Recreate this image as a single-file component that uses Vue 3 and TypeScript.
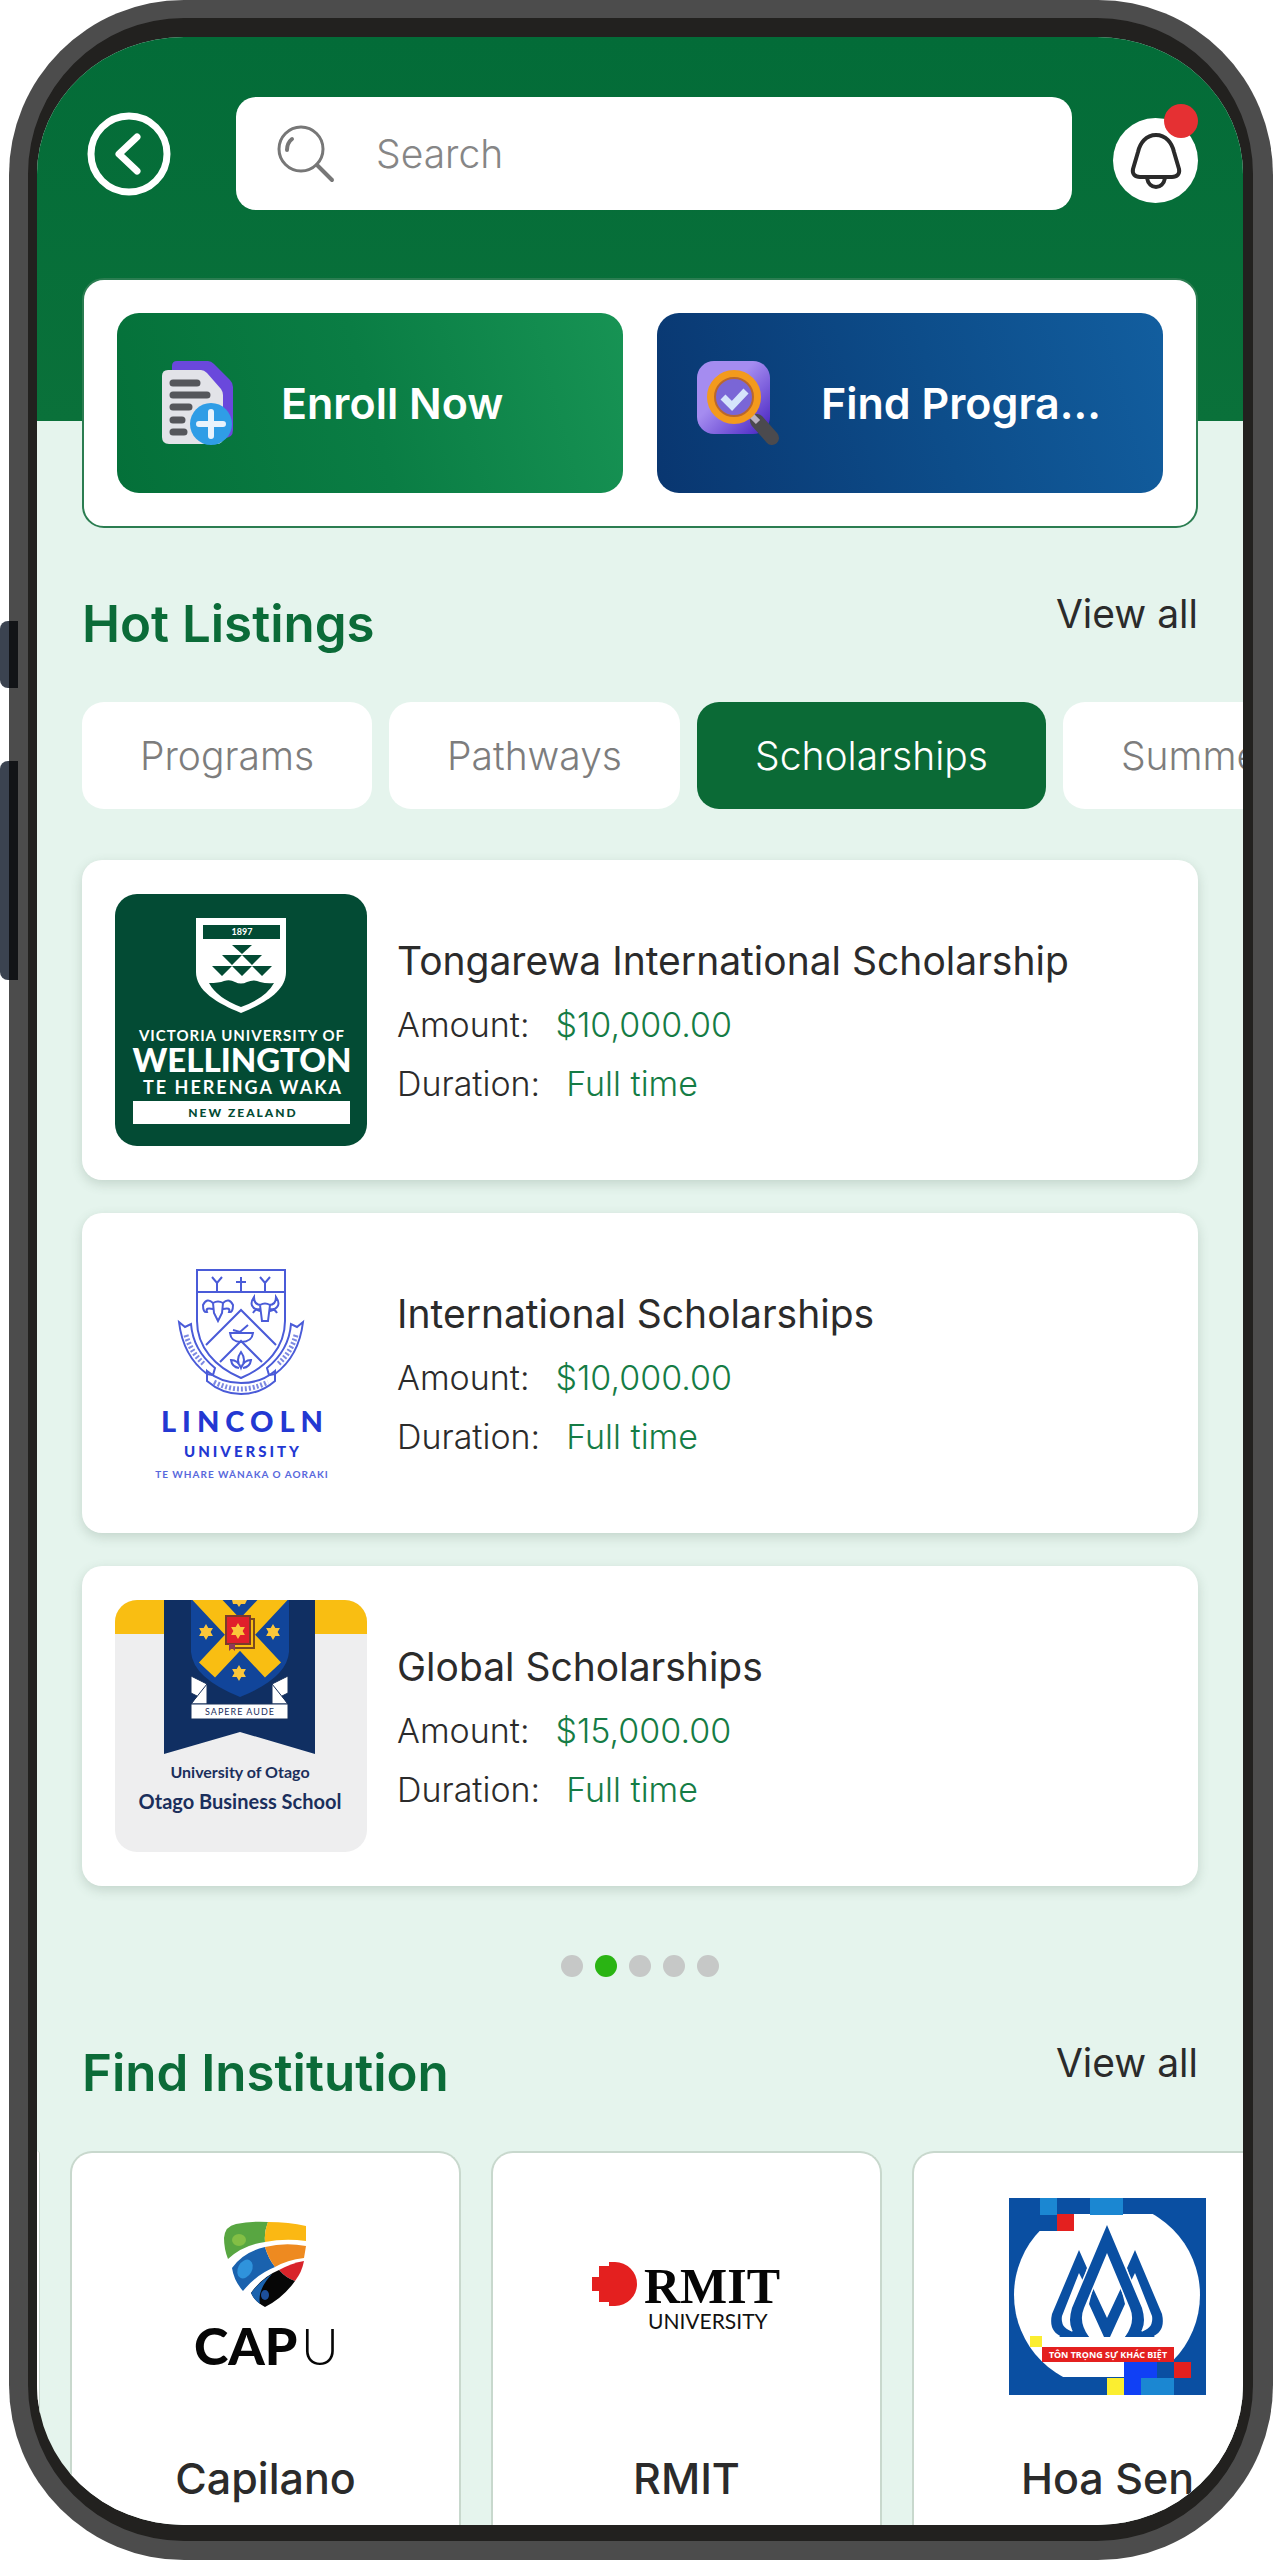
<script setup lang="ts">
import { ref } from 'vue'

interface Listing {
  id: 'wellington' | 'lincoln' | 'otago'
  title: string
  amount: string
  duration: string
}

interface Institution {
  id: 'capu' | 'rmit' | 'hoasen'
  name: string
}

const query = ref('')
const tabs: string[] = ['Programs', 'Pathways', 'Scholarships', 'Summer']
const activeTab = ref('Scholarships')
const activePage = ref(2)

const listings: Listing[] = [
  { id: 'wellington', title: 'Tongarewa International Scholarship', amount: '$10,000.00', duration: 'Full time' },
  { id: 'lincoln', title: 'International Scholarships', amount: '$10,000.00', duration: 'Full time' },
  { id: 'otago', title: 'Global Scholarships', amount: '$15,000.00', duration: 'Full time' },
]

const institutions: Institution[] = [
  { id: 'capu', name: 'Capilano' },
  { id: 'rmit', name: 'RMIT' },
  { id: 'hoasen', name: 'Hoa Sen' },
]

// Six-pointed star outline centred on (cx, cy)
function star(cx: number, cy: number, r: number): string {
  const points: string[] = []
  for (let i = 0; i < 12; i++) {
    const radius = i % 2 === 0 ? r : r * 0.58
    const angle = (Math.PI / 6) * i - Math.PI / 2
    points.push(`${cx + radius * Math.cos(angle)},${cy + radius * Math.sin(angle)}`)
  }
  return points.join(' ')
}
</script>

<template>
  <div class="device">
    <span class="side-key side-key-small"></span>
    <span class="side-key side-key-large"></span>
    <div class="bezel">
      <div class="screen">
        <header class="hero">
          <button class="back" type="button" aria-label="Back">
            <svg width="84" height="86" viewBox="0 0 84 86" fill="none" stroke="#fff" stroke-linecap="round" stroke-linejoin="round">
              <circle cx="42" cy="43" r="38" stroke-width="7" />
              <path d="M50 26 32 43 50 60" stroke-width="7" />
            </svg>
          </button>
          <label class="search">
            <svg width="58" height="58" viewBox="0 0 58 58" fill="none" stroke="#777" stroke-width="3" stroke-linecap="round">
              <circle cx="24" cy="24" r="22" />
              <path d="M40 40 55 55" stroke-width="4" />
              <path d="M10 25Q10 18 15 14" stroke-width="4" />
            </svg>
            <input v-model="query" type="text" placeholder="Search" aria-label="Search" />
          </label>
          <button class="bell" type="button" aria-label="Notifications">
            <span class="bell-disc">
              <svg width="85" height="85" viewBox="0 0 85 85" fill="none" stroke="#2a2a2a" stroke-width="4" stroke-linejoin="round">
                <path d="M43 17C33 17 27 25 25 34L20 51C19 56 22 59 27 59H59C64 59 67 56 66 51L61 34C59 25 53 17 43 17Z" />
                <path d="M34 60C35 66 39 69 43 69C47 69 51 66 52 60" />
              </svg>
            </span>
            <span class="badge"></span>
          </button>
        </header>

        <section class="quick">
          <button class="quick-button enroll" type="button">
            <svg width="90" height="90" viewBox="0 0 90 90">
              <path d="M23 3H54Q57 3 60 6L76 22Q79 25 79 29V72Q79 80 70 80H18V8Q18 3 23 3Z" fill="#6a48dc" />
              <path d="M14 12H47Q50 12 53 15L67 31Q69 34 69 37V80Q69 86 62 86H15Q8 86 8 79V18Q8 12 14 12Z" fill="#e2e3e8" />
              <g stroke="#55565b" stroke-width="7" stroke-linecap="round">
                <path d="M19 25H43M19 37H53M19 49H35M19 62H28M19 74H30" />
              </g>
              <circle cx="57" cy="66" r="21" fill="#2f9de6" />
              <path d="M57 54V78M45 66H69" stroke="#e8f3fc" stroke-width="6" stroke-linecap="round" />
            </svg>
            <span>Enroll Now</span>
          </button>
          <button class="quick-button find" type="button">
            <svg width="90" height="90" viewBox="0 0 90 90">
              <defs>
                <linearGradient id="tile" x1="0" y1="0" x2="1" y2="1">
                  <stop offset="0.4" stop-color="#a58cf0" />
                  <stop offset="1" stop-color="#4420c0" />
                </linearGradient>
              </defs>
              <rect x="3" y="3" width="73" height="73" rx="17" fill="url(#tile)" />
              <path d="M63 63 78 80" stroke="#4b4a4e" stroke-width="14" stroke-linecap="round" />
              <path d="M58 58 64 64" stroke="#b9b2c2" stroke-width="6" />
              <circle cx="40" cy="39" r="23" fill="#7a66d6" stroke="#f39a1d" stroke-width="8" />
              <circle cx="40" cy="39" r="19" fill="none" stroke="#b9672e" stroke-width="2" />
              <path d="M29 39 38 48 52 33" fill="none" stroke="#d5e4fb" stroke-width="7" />
            </svg>
            <span>Find Progra...</span>
          </button>
        </section>

        <section>
          <div class="heading">
            <h2>Hot Listings</h2>
            <a href="#listings">View all</a>
          </div>
          <nav class="tabs">
            <button
              v-for="tab in tabs"
              :key="tab"
              type="button"
              class="tab"
              :class="{ active: tab === activeTab }"
              @click="activeTab = tab"
            >
              {{ tab }}
            </button>
          </nav>

          <div id="listings" class="listings">
            <article v-for="item in listings" :key="item.id" class="listing">
              <svg v-if="item.id === 'wellington'" class="listing-logo" viewBox="0 0 252 252">
                <rect width="252" height="252" fill="#034b34" />
                <path d="M81 24H171V78C171 97 150 109 126 119C102 109 81 97 81 78Z" fill="#fff" />
                <g fill="#034b34">
                  <path d="M88 31H165V45H88Z" />
                  <path d="M117 51H137L127 60Z" />
                  <path d="M107 61H127L117 71ZM127 61H147L137 71Z" />
                  <path d="M97 72H117L107 82ZM117 72H137L127 82ZM137 72H157L147 82Z" />
                  <path d="M94 89Q104 89 109 87Q115 85 120 88Q126 91 132 88Q139 85 145 88Q152 90 159 89Q151 104 126 113Q102 104 94 89Z" />
                </g>
                <g fill="#fff" text-anchor="middle" font-family="Lato, sans-serif" font-weight="700">
                  <text x="127" y="41" font-size="9">1897</text>
                  <text class="track-slight" x="127" y="147" font-size="15">VICTORIA UNIVERSITY OF</text>
                  <text x="127" y="178" font-size="33" font-weight="900">WELLINGTON</text>
                  <text class="track" x="128" y="200" font-size="18">TE HERENGA WAKA</text>
                </g>
                <rect x="18" y="207" width="217" height="23" fill="#fff" />
                <text class="track" x="128" y="223" font-size="12" text-anchor="middle" font-family="Lato, sans-serif" font-weight="900" fill="#034b34">NEW ZEALAND</text>
              </svg>

              <svg v-else-if="item.id === 'lincoln'" class="listing-logo" viewBox="0 0 252 252">
                <rect width="252" height="252" fill="#fff" />
                <g fill="none" stroke="#4a5bd8" stroke-width="2">
                  <path d="M82 23H170V74C170 100 152 120 126 131C100 120 82 100 82 74ZM82 45H170" />
                  <path d="M97 30 102 36 107 30M102 36V45M145 30 150 36 155 30M150 36V45M126 30V45M121 35H131" />
                  <path d="M91 98 126 63 161 98M105 115 126 94 147 115" />
                  <path d="M115 86H138Q137 95 126 95Q116 95 115 86ZM118 83 125 85 133 78" />
                  <path d="M126 105Q132 113 126 121Q120 113 126 105ZM124 121Q117 120 116 113Q123 113 126 121Q129 113 136 113Q135 120 128 121" />
                  <path d="M98 56Q103 53 108 56L107 66L103 74L99 66ZM98 56Q92 50 88 58Q88 66 92 65Q90 60 98 62M108 56Q114 50 118 58Q118 66 114 65Q116 60 108 62" />
                  <path d="M145 58Q150 55 155 58L154 66L153 74H147L146 66ZM146 58Q139 58 139 50Q132 60 145 64M154 58Q161 58 161 50Q168 60 155 64M145 62Q140 62 138 66M155 62Q160 62 162 66" />
                  <path d="M76 77Q78 103 100 121L98 128L92 127Q68 109 64 75L70 80Z" />
                  <path d="M176 77Q174 103 152 121L154 128L160 127Q184 109 188 75L182 80Z" />
                  <path d="M92 124V134Q107 147 126 147Q145 147 160 134V124Q146 136 126 136Q106 136 92 124Z" />
                  <path d="M71 88Q76 106 90 118M181 88Q176 106 162 118M99 135Q113 142 126 142Q139 142 153 135" stroke-width="5" stroke-dasharray="2 2" stroke="#7d89e2" />
                </g>
                <g fill="#2338d2" text-anchor="middle" font-family="Lato, sans-serif">
                  <text class="track-wide" x="130" y="185" font-size="29" font-weight="900">LINCOLN</text>
                  <text class="track-mid" x="128" y="210" font-size="15" font-weight="900">UNIVERSITY</text>
                  <text class="track-slight" x="127" y="231" font-size="10" font-weight="700" fill="#5868dc">TE WHARE WĀNAKA O AORAKI</text>
                </g>
              </svg>

              <svg v-else class="listing-logo" viewBox="0 0 252 252">
                <rect width="252" height="252" fill="#eeeeef" />
                <rect width="252" height="34" fill="#f9be12" />
                <path d="M49 0H200V154L125 132L49 154Z" fill="#102f62" />
                <clipPath id="arms"><path d="M76 0H174V52Q172 78 125 97Q78 78 76 52Z" /></clipPath>
                <g clip-path="url(#arms)">
                  <rect x="76" y="0" width="98" height="97" fill="#11459a" />
                  <path d="M85 -8 158 70M165 -8 92 70" stroke="#f9be12" stroke-width="22" />
                </g>
                <g fill="#fbc63a">
                  <polygon :points="star(91, 32, 8)" />
                  <polygon :points="star(158, 32, 8)" />
                  <polygon :points="star(124, 73, 8)" />
                  <path d="M117 0H132L130 4H126L124 7L122 4H118Z" />
                </g>
                <path d="M114 19H139V48H117Z" fill="#f9be12" stroke="#7b4a1e" stroke-width="2" />
                <rect x="111" y="16" width="24" height="28" fill="#e0202b" stroke="#7b3a2a" stroke-width="2" />
                <polygon :points="star(123, 31, 8)" fill="#fbc63a" />
                <path d="M114 44H120V51L117 48L114 51Z" fill="#8c3a5a" />
                <g fill="#fff" stroke="#16305a" stroke-width="1">
                  <path d="M76 76 92 84V104H76L82 96L76 93Z" />
                  <path d="M173 76 157 84V104H173L167 96L173 93Z" />
                  <path d="M76 104 92 84M173 104 157 84" />
                  <path d="M76 104H173V119H76Z" />
                </g>
                <g fill="#1b2f5c" text-anchor="middle" font-family="Lato, sans-serif">
                  <text class="track-slight" x="125" y="115" font-size="9">SAPERE AUDE</text>
                  <text x="125" y="178" font-size="16" font-weight="700">University of Otago</text>
                  <text x="125" y="209" font-size="20" font-weight="700">Otago Business School</text>
                </g>
              </svg>

              <div class="listing-text">
                <h3>{{ item.title }}</h3>
                <p><span>Amount:</span><b>{{ item.amount }}</b></p>
                <p><span>Duration:</span><b>{{ item.duration }}</b></p>
              </div>
            </article>
          </div>

          <div class="pager">
            <button
              v-for="page in 5"
              :key="page"
              type="button"
              class="dot"
              :class="{ active: page === activePage }"
              :aria-label="`Page ${page}`"
              @click="activePage = page"
            ></button>
          </div>
        </section>

        <section class="institution-section">
          <div class="heading">
            <h2>Find Institution</h2>
            <a href="#institutions">View all</a>
          </div>
          <div id="institutions" class="institutions">
            <article v-for="school in institutions" :key="school.id" class="institution">
              <svg v-if="school.id === 'capu'" width="197" height="197" viewBox="0 0 197 197">
                <path d="M57 40Q58 28 69 26Q84 23 101 24Q97 34 98 44Q76 47 61 61Q57 51 57 40Z" fill="#58a641" />
                <ellipse cx="72" cy="42" rx="7" ry="6" fill="#83bf45" />
                <path d="M101 24Q122 24 139 28V43Q118 40 98 44Q97 34 101 24Z" fill="#fbb813" />
                <path d="M65 70Q76 54 98 49Q101 60 108 69Q90 76 76 93Q67 83 65 70Z" fill="#1a62ae" />
                <ellipse cx="78" cy="71" rx="7" ry="10" fill="#2f93dc" transform="rotate(28 78 71)" />
                <path d="M98 49Q118 44 139 48L137 60Q120 62 108 69Q101 60 98 49Z" fill="#ee8a20" />
                <path d="M112 72Q125 65 137 63Q135 74 128 83Q119 80 112 72Z" fill="#d8232a" />
                <path d="M112 72Q119 80 128 83Q116 100 98 109Q88 104 84 95Q95 79 112 72Z" fill="#060606" />
                <path d="M84 95Q92 84 105 76Q90 92 93 106Q87 102 84 95Z" fill="#1a62ae" />
                <ellipse cx="98" cy="97" rx="4" ry="5" fill="#1d4f9a" />
                <g fill="#060606" font-family="Lato, sans-serif" font-size="52">
                  <text x="27" y="167" font-weight="900">CAP</text>
                  <text x="134" y="167" font-weight="300">U</text>
                </g>
              </svg>

              <svg v-else-if="school.id === 'rmit'" width="197" height="197" viewBox="0 0 197 197">
                <path d="M21 64H27A22 22 0 0 1 27 108H21V104H11V93H4V79H11V68H21Z" fill="#e4201f" />
                <text x="56" y="105" font-family="'Liberation Serif', serif" font-size="50" font-weight="700" fill="#050505">RMIT</text>
                <text x="60" y="131" font-family="Lato, sans-serif" font-size="21" fill="#111">UNIVERSITY</text>
              </svg>

              <svg v-else width="197" height="197" viewBox="0 0 197 197">
                <rect width="197" height="197" fill="#0a4fa2" />
                <clipPath id="window"><path d="M48 16H197V179H0V33H48Z" /></clipPath>
                <circle cx="98" cy="97" r="93" fill="#fff" clip-path="url(#window)" />
                <path d="M31 0H48V17H31ZM81 0H114V17H81Z" fill="#1b87d2" />
                <path d="M48 16H65V33H48Z" fill="#e4201f" />
                <path d="M21 138H33V149H21Z" fill="#fbee30" />
                <g fill="#0a4fa2">
                  <path d="M70 52 78 70L74 83L70 75L53 118Q51 131 65 134L70 139H54Q39 134 43 116Z" />
                  <path d="M126 52 118 70L122 83L126 75L143 118Q145 131 131 134L126 139H142Q157 134 153 116Z" />
                  <path d="M84 90 98 120 112 90 116 106 101 139H95L80 106Z" />
                  <path
                    d="M98 27 133 110Q139 130 127 139H116Q127 124 121 110L98 55L75 110Q69 124 80 139H69Q57 130 63 110Z"
                    stroke="#fff"
                    stroke-width="3"
                    paint-order="stroke"
                  />
                  <path d="M71 131 80 139H50L54 136ZM125 131 116 139H146L142 136Z" />
                </g>
                <path d="M33 149H165V164H33Z" fill="#e4201f" />
                <text x="99" y="160" text-anchor="middle" font-family="'Noto Sans', sans-serif" font-size="9" font-weight="700" fill="#fff">TÔN TRỌNG SỰ KHÁC BIỆT</text>
                <path d="M115 164H148V197H115Z" fill="#1040f5" />
                <path d="M148 164H165V180H148Z" fill="#0a4fa2" />
                <path d="M132 180H165V197H132Z" fill="#1b87d2" />
                <path d="M165 164H182V180H165Z" fill="#e4201f" />
                <path d="M98 180H115V197H98Z" fill="#fbee30" />
              </svg>
              <h3>{{ school.name }}</h3>
            </article>
          </div>
        </section>
      </div>
    </div>
  </div>
</template>

<style>
body {
  margin: 0;
  background: #fff;
}
</style>

<style scoped>
.device,
.device * {
  box-sizing: border-box;
}

.device {
  position: relative;
  display: flex;
  min-height: 100vh;
  padding-left: 9px;
  font-family: Inter, 'Noto Sans', sans-serif;
  color: #2b2b2b;
}

button {
  border: 0;
  padding: 0;
  background: none;
  font: inherit;
  color: inherit;
  cursor: pointer;
}

h2,
h3,
p {
  margin: 0;
}

svg {
  display: block;
  flex: none;
}

.side-key {
  position: absolute;
  left: 0;
  z-index: 1;
  width: 18px;
  border-radius: 8px 0 0 8px;
  background: linear-gradient(90deg, #3b4350 50%, #121417 50%);
}

.side-key-small {
  top: 621px;
  height: 67px;
}

.side-key-large {
  top: 761px;
  height: 219px;
}

.bezel {
  display: flex;
  flex: 1;
  min-width: 0;
  padding: 18px 20px 19px 19px;
  border-radius: 175px;
  background: #4c4c4c;
}

.screen {
  display: flex;
  flex-direction: column;
  flex: 1;
  min-width: 0;
  overflow: hidden;
  border: solid #22211f;
  border-width: 19px 10px 16px 9px;
  border-radius: 156px;
  background: #e5f4ed;
}

.hero {
  display: flex;
  align-items: center;
  gap: 41px;
  padding: 60px 45px 211px 50px;
  background: linear-gradient(#036c38, #0a713a);
}

.back {
  margin-right: 24px;
}

.search {
  display: flex;
  flex: 1;
  align-items: center;
  gap: 41px;
  min-width: 0;
  height: 113px;
  padding: 0 41px;
  border-radius: 20px;
  background: #fff;
}

.search input {
  flex: 1;
  min-width: 0;
  border: 0;
  padding: 0;
  outline: 0;
  background: none;
  font: inherit;
  font-size: 39px;
  font-weight: 300;
  color: #333;
}

.search input::placeholder {
  color: #868686;
  opacity: 1;
}

.bell {
  position: relative;
  display: flex;
  align-items: flex-end;
  width: 85px;
  height: 99px;
}

.bell-disc {
  border-radius: 50%;
  background: #fff;
}

.badge {
  position: absolute;
  top: 0;
  right: 0;
  width: 34px;
  height: 34px;
  border-radius: 50%;
  background: #e53033;
}

.quick {
  display: flex;
  gap: 34px;
  margin: -143px 45px 0;
  padding: 33px;
  border: 2px solid #2b7d51;
  border-radius: 22px;
  background: #fff;
}

.quick-button {
  display: flex;
  flex: 1;
  align-items: center;
  gap: 37px;
  min-width: 0;
  height: 180px;
  padding: 0 37px;
  border-radius: 22px;
  font-size: 43px;
  font-weight: 600;
  white-space: nowrap;
  color: #fff;
}

.enroll {
  background: linear-gradient(75deg, #047039, #0a7d44 50%, #179354);
}

.find {
  background: linear-gradient(75deg, #093670, #0d4d8a 55%, #125e9f);
}

.heading {
  display: flex;
  align-items: flex-start;
  justify-content: space-between;
  margin: 66px 45px 48px;
}

.heading h2 {
  font-size: 51px;
  font-weight: 600;
  line-height: 60px;
  color: #0b6b38;
}

.heading a {
  font-size: 39px;
  line-height: 40px;
  color: #2b2b2b;
  text-decoration: none;
}

.tabs {
  display: flex;
  gap: 17px;
  overflow: hidden;
  padding-left: 45px;
}

.tab {
  flex: none;
  height: 107px;
  padding: 0 58px;
  border-radius: 22px;
  background: #fff;
  font-size: 39px;
  font-weight: 300;
  color: #7d7d7d;
}

.tab.active {
  background: #0b6a36;
  color: #fff;
}

.listings {
  display: flex;
  flex-direction: column;
  gap: 33px;
  margin: 51px 45px 69px;
}

.listing {
  display: flex;
  align-items: center;
  gap: 30px;
  padding: 34px 33px;
  border-radius: 20px;
  background: #fff;
  box-shadow: 0 4px 12px rgba(60, 90, 70, 0.2);
}

.listing-logo {
  width: 252px;
  height: 252px;
  border-radius: 22px;
}

.track-slight {
  letter-spacing: 1px;
}

.track {
  letter-spacing: 2px;
}

.track-mid {
  letter-spacing: 3px;
}

.track-wide {
  letter-spacing: 6px;
}

.listing-text {
  min-width: 0;
}

.listing-text h3 {
  font-size: 39px;
  font-weight: 400;
  line-height: 68px;
  white-space: nowrap;
}

.listing-text p {
  display: flex;
  gap: 26px;
  font-size: 34px;
  font-weight: 300;
  line-height: 59px;
}

.listing-text b {
  font-weight: 300;
  color: #157c45;
}

.pager {
  display: flex;
  justify-content: center;
  gap: 12px;
}

.dot {
  width: 22px;
  height: 22px;
  border-radius: 50%;
  background: #c6c8c7;
}

.dot.active {
  background: #2ab413;
}

.institution-section {
  display: flex;
  flex: 1;
  flex-direction: column;
}

.institutions {
  display: flex;
  flex: 1;
  gap: 30px;
  overflow: hidden;
}

.institutions::before {
  content: '';
  flex: none;
  width: 2px;
  border-right: 1px solid #c9d8ce;
  border-radius: 0 22px 0 0;
  background: #fff;
}

.institution {
  display: flex;
  flex: none;
  flex-direction: column;
  align-items: center;
  width: 391px;
  padding: 45px 0 22px;
  border: 2px solid #c8d8cd;
  border-bottom: 0;
  border-radius: 22px 22px 0 0;
  background: #fff;
}

.institution h3 {
  margin-top: 58px;
  font-size: 43px;
  font-weight: 500;
  line-height: 50px;
}
</style>
